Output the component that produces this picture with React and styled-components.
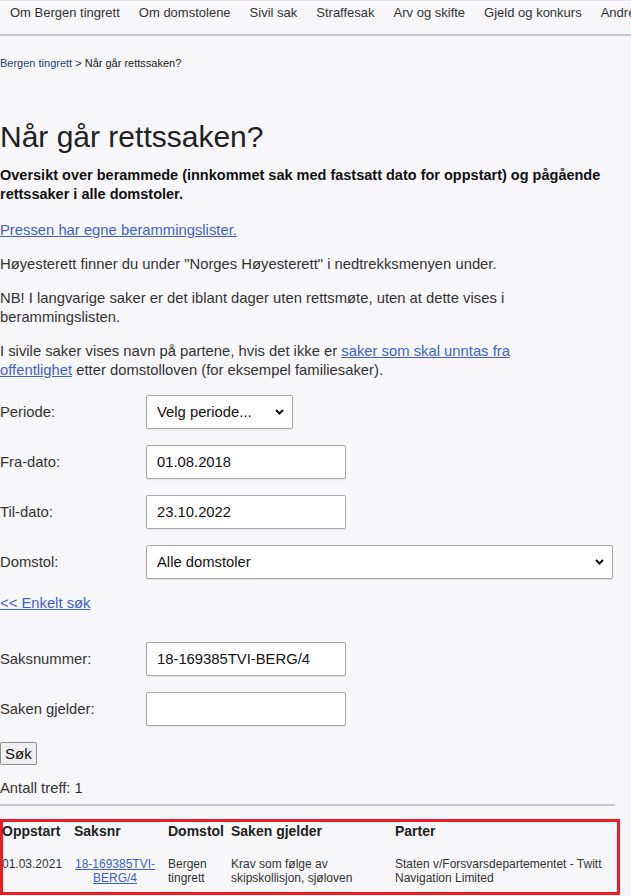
import React from 'react';
import styled, {createGlobalStyle} from 'styled-components';

const GlobalStyle = createGlobalStyle`
  html, body {
    margin: 0;
    padding: 0;
    background: #f7f7f9;
  }
  body {
    font-family: "Liberation Sans", Arial, sans-serif;
    color: #2b2b2b;
    overflow: hidden;
  }
`

const Page = styled.div`
  width: 631px;
  height: 896px;
  overflow: hidden;
`

const Nav = styled.nav`
  display: flex;
  white-space: nowrap;
  overflow: hidden;
  border-top: 1px solid #e4e4e8;
  border-bottom: 2px solid #c6c6c8;
  align-items: flex-start;
  padding-top: 4px;
  box-sizing: border-box;
  height: 36px;
`

const NavItem = styled.a`
  font-size: 13px;
  color: #333;
  padding: 0 9.5px;
  text-decoration: none;
  &:first-child {
    padding-left: 10px;
  }
`

const Main = styled.main`
  width: 618px;
`

const Crumbs = styled.div`
  font-size: 11px;
  margin-top: 21px;
  color: #222;
`

const CrumbLink = styled.a`
  color: #1f3f70;
  text-decoration: none;
`

const Title = styled.h1`
  font-size: 30px;
  font-weight: normal;
  color: #222;
  margin: 50px 0 11px;
  line-height: 36px;
`

const Text = styled.p`
  font-size: ${p => (p.$bold ? '14.5px' : '14.8px')};
  line-height: 19px;
  margin: 0 0 ${p => (p.$bold ? '17px' : '15px')};
  font-weight: ${p => (p.$bold ? 'bold' : 'normal')};
  color: ${p => (p.$bold ? '#111' : '#333')};
  max-width: ${p => p.$narrow ? '540px' : 'none'};
`

const Link = styled.a`
  color: #3d5fd6;
  text-decoration: underline;
`

const Form = styled.div`
  display: grid;
  grid-template-columns: 146px 1fr;
  row-gap: 16px;
  align-items: center;
  margin-top: 15px;
`

const Label = styled.label`
  font-size: 14.8px;
  color: #333;
`

const Field = styled.input`
  box-sizing: border-box;
  width: 200px;
  height: 34px;
  border: 1px solid #a9a9a9;
  border-radius: 2px;
  background: #fff;
  padding: 0 10px;
  font-family: inherit;
  font-size: 14.8px;
  color: #111;
  box-shadow: 0 1px 1px rgba(0,0,0,0.08);
`

const SelectWrap = styled.div`
  position: relative;
  width: ${p => p.$w};
  height: 34px;
`

const Select = styled.select`
  appearance: none;
  box-sizing: border-box;
  width: 100%;
  height: 34px;
  border: 1px solid #a9a9a9;
  border-radius: 2px;
  background: #fff;
  padding: 0 10px;
  font-family: inherit;
  font-size: 14.8px;
  color: #111;
  box-shadow: 0 1px 1px rgba(0,0,0,0.08);
`

const Chevron = styled.svg`
  position: absolute;
  right: 9px;
  top: 14px;
  pointer-events: none;
`

const Toggle = styled(Link)`
  grid-column: 1 / -1;
  font-size: 14.8px;
  justify-self: start;
  margin-top: 0;
  margin-bottom: 15px;
`

const Button = styled.button`
  font-family: inherit;
  font-size: 15px;
  padding: 1px 4px;
  height: 23px;
  border: 1px solid #8f8f8f;
  border-radius: 2px;
  background: #efefef;
  color: #111;
  margin-top: 16px;
  display: block;
`

const Count = styled.div`
  font-size: 14.8px;
  color: #333;
  margin-top: 15px;
`

const Rule = styled.hr`
  width: 615px;
  margin: 8px 0 0;
  border: none;
  border-top: 2px solid #c9c9cb;
`

const Results = styled.div`
  margin-top: 13px;
  width: 620px;
  height: 76px;
  box-sizing: border-box;
  border: 3px solid #ec1c24;
`

const Table = styled.table`
  border-collapse: collapse;
  margin-top: 0;
  margin-left: -1px;
`

const Th = styled.th`
  text-align: left;
  font-size: 14px;
  font-weight: bold;
  color: #222;
  padding: 0 2px 0 0;
  height: 18px;
  width: ${p => p.$w};
`

const Td = styled.td`
  font-size: 12px;
  line-height: 14px;
  color: #333;
  vertical-align: top;
  padding: 17px ${p => (p.$center ? '12px' : '2px')} 0 0;
  text-align: ${p => (p.$center ? 'center' : 'left')};
`

const chevron = (
    <Chevron width="9" height="6" viewBox="0 0 9 6">
        <path d="M1 1 L4.5 4.5 L8 1" stroke="#111" strokeWidth="2" fill="none"/>
    </Chevron>
)

const App = () => {
    const nav = ['Om Bergen tingrett', 'Om domstolene', 'Sivil sak', 'Straffesak', 'Arv og skifte', 'Gjeld og konkurs', 'Andre saker']
    return (
        <Page>
            <GlobalStyle/>
            <Nav>
                {nav.map(n => <NavItem key={n}>{n}</NavItem>)}
            </Nav>
            <Main>
                <Crumbs><CrumbLink>Bergen tingrett</CrumbLink> &gt; Når går rettssaken?</Crumbs>
                <Title>Når går rettssaken?</Title>
                <Text $bold>Oversikt over berammede (innkommet sak med fastsatt dato for oppstart) og pågående rettssaker i alle domstoler.</Text>
                <Text><Link>Pressen har egne berammingslister.</Link></Text>
                <Text>Høyesterett finner du under "Norges Høyesterett" i nedtrekksmenyen under.</Text>
                <Text $narrow>NB! I langvarige saker er det iblant dager uten rettsmøte, uten at dette vises i berammingslisten.</Text>
                <Text $narrow>I sivile saker vises navn på partene, hvis det ikke er <Link>saker som skal unntas fra offentlighet</Link> etter domstolloven (for eksempel familiesaker).</Text>

                <Form>
                    <Label>Periode:</Label>
                    <SelectWrap $w="147px">
                        <Select defaultValue="v"><option value="v">Velg periode...</option></Select>
                        {chevron}
                    </SelectWrap>
                    <Label>Fra-dato:</Label>
                    <Field defaultValue="01.08.2018"/>
                    <Label>Til-dato:</Label>
                    <Field defaultValue="23.10.2022"/>
                    <Label>Domstol:</Label>
                    <SelectWrap $w="467px">
                        <Select defaultValue="a"><option value="a">Alle domstoler</option></Select>
                        {chevron}
                    </SelectWrap>
                    <Toggle>&lt;&lt; Enkelt søk</Toggle>
                    <Label>Saksnummer:</Label>
                    <Field defaultValue="18-169385TVI-BERG/4"/>
                    <Label>Saken gjelder:</Label>
                    <Field/>
                </Form>
                <Button>Søk</Button>
                <Count>Antall treff: 1</Count>
                <Rule/>
                <Results>
                    <Table>
                        <thead>
                        <tr>
                            <Th $w="70px">Oppstart</Th>
                            <Th $w="92px">Saksnr</Th>
                            <Th $w="61px">Domstol</Th>
                            <Th $w="162px">Saken gjelder</Th>
                            <Th $w="220px">Parter</Th>
                        </tr>
                        </thead>
                        <tbody>
                        <tr>
                            <Td>01.03.2021</Td>
                            <Td $center><Link>18-169385TVI-<br/>BERG/4</Link></Td>
                            <Td>Bergen<br/>tingrett</Td>
                            <Td>Krav som følge av<br/>skipskollisjon, sjøloven</Td>
                            <Td>Staten v/Forsvarsdepartementet - Twitt Navigation Limited</Td>
                        </tr>
                        </tbody>
                    </Table>
                </Results>
            </Main>
        </Page>
    )
}

export default App
